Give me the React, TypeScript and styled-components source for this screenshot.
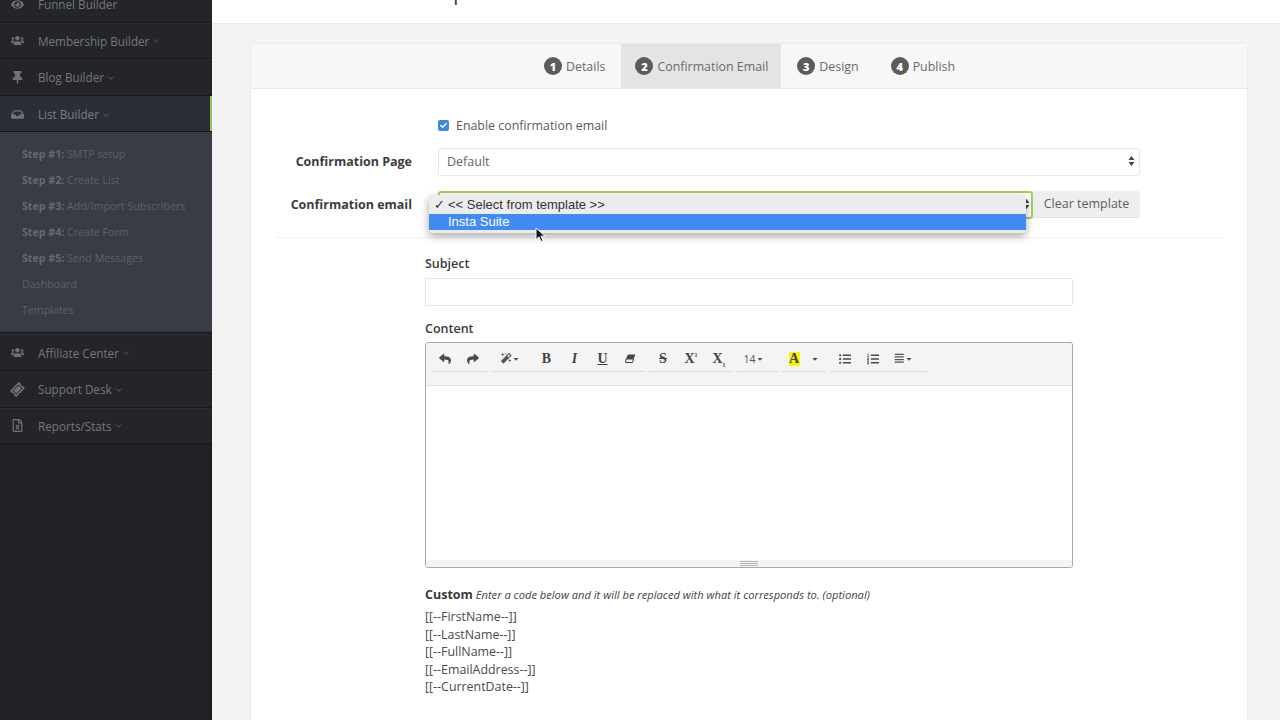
import React from "react";
import styled, { createGlobalStyle } from "styled-components";
import {
  FaEye, FaUsers, FaThumbtack, FaInbox, FaTicketAlt, FaRegFileExcel,
  FaMagic, FaListUl, FaListOl, FaAlignJustify, FaReply, FaShare, FaCaretDown, FaCheck,
} from "react-icons/fa";
import { ChevronDown } from "lucide-react";

const Global = createGlobalStyle`
  html, body { margin: 0; padding: 0; height: 100%; overflow: hidden; }
  body { font-family: "Open Sans", "Liberation Sans", sans-serif; font-size: 13px; color: #555; }
`;

const Page = styled.div`
  display: flex;
  width: 1280px;
  height: 720px;
  overflow: hidden;
  background: #f3f3f4;
`;

const Sidebar = styled.nav`
  width: 212px;
  flex: none;
  background: #1f2126;
  overflow: hidden;
  box-shadow: inset -1px 0 0 #17181c;
`;

const NavList = styled.div`
  margin-top: -14px;
  display: flex;
  flex-direction: column;
`;

const NavItem = styled.div<{ $active?: boolean }>`
  height: 36.6px;
  box-sizing: border-box;
  display: flex;
  align-items: center;
  padding: 1px 0 0 11px;
  position: relative;
  color: ${(p) => (p.$active ? "#7b7e85" : "#75777c")};
  font-size: 11.7px;
  background: ${(p) => (p.$active ? "#2b2e35" : "#24252a")};
  border-bottom: 1px solid #17181c;
  box-shadow: inset 0 1px 0 #2b2c31;
`;

const ActiveBar = styled.span`
  position: absolute;
  right: 0;
  top: 0;
  bottom: 0;
  width: 2px;
  background: #97c35a;
`;

const NavIcon = styled.span<{ $tilt?: boolean }>`
  width: 27px;
  flex: none;
  display: flex;
  font-size: 13px;
  color: #6f7176;
  svg { transform: ${(p) => (p.$tilt ? "rotate(-45deg)" : "none")}; }
`;

const Chevron = styled(ChevronDown)`
  margin: 1px 0 0 2px;
  width: 10px;
  height: 10px;
  stroke-width: 1.5;
`;

const SubMenu = styled.div`
  background: #393b45;
  padding: 9px 0 10px 22px;
  height: 200px;
  box-sizing: border-box;
  margin-bottom: 2px;
  border-bottom: 1px solid #30323a;
`;

const SubItem = styled.div`
  height: 26px;
  line-height: 26px;
  font-size: 10.65px;
  color: #5e616c;
  b { font-weight: 700; color: #666974; }
`;

const Main = styled.main`
  flex: 1;
  min-width: 0;
  display: flex;
  flex-direction: column;
`;

const TopBar = styled.header`
  height: 24px;
  flex: none;
  background: #fff;
  border-bottom: 1px solid #ececec;
  box-sizing: border-box;
  overflow: hidden;
  padding-left: 241px;
`;

const TopTitle = styled.div`
  font-size: 22px;
  line-height: 22px;
  margin-top: -20px;
  color: #444;
`;

const Card = styled.section`
  margin: 19px 32px 0 38px;
  flex: 1;
  background: #fff;
  border: 1px solid #ececec;
  border-bottom: 0;
  border-radius: 3px 3px 0 0;
`;

const Tabs = styled.div`
  height: 44px;
  background: #f7f7f7;
  border-bottom: 1px solid #e9e9e9;
  display: flex;
  padding-left: 277px;
`;

const Tab = styled.div<{ $active?: boolean }>`
  display: flex;
  align-items: center;
  gap: 4px;
  padding: 0 ${(p) => (p.$active ? "13px 0 14px" : "16px")};
  background: ${(p) => (p.$active ? "#e4e4e4" : "transparent")};
  color: #6a6a6a;
  font-size: 12.4px;
`;

const Badge = styled.span`
  width: 18px;
  height: 18px;
  border-radius: 50%;
  background: #5c5c5c;
  color: #fff;
  font-weight: 800;
  font-size: 11px;
  display: flex;
  align-items: center;
  justify-content: center;
`;

const Form = styled.div`
  position: relative;
  padding: 26px 25px 0 25px;
`;

const FieldGrid = styled.div`
  display: grid;
  grid-template-columns: 136px 702px;
  column-gap: 26px;
  align-items: center;
  row-gap: 15px;
`;

const CheckCell = styled.label`
  grid-column: 2;
  display: flex;
  align-items: center;
  gap: 7px;
  height: 20px;
  color: #5a5a5a;
  font-size: 12.4px;
  margin-bottom: -2px;
`;

const CheckBox = styled.span`
  width: 11px;
  height: 11px;
  border-radius: 2px;
  background: #3f86e0;
  color: #fff;
  display: flex;
  align-items: center;
  justify-content: center;
  font-size: 7px;
`;

const FieldLabel = styled.div`
  text-align: right;
  font-weight: 700;
  font-size: 12.5px;
  color: #3c3c3c;
  padding-bottom: 2px;
`;

const SelectBox = styled.div<{ $accent?: boolean }>`
  flex: 1;
  height: 28px;
  box-sizing: border-box;
  border: ${(p) => (p.$accent ? "2px solid #a6cf5c" : "1px solid #e6e6e6")};
  border-radius: 3px;
  padding: 0 ${(p) => (p.$accent ? "1px" : "4px")} 2px 8px;
  display: flex;
  align-items: center;
  justify-content: space-between;
  color: #666;
  font-size: 12.5px;
  background: #fff;
`;

const TemplateRow = styled.div`
  display: flex;
`;

const ClearButton = styled.div`
  width: 107px;
  flex: none;
  height: 27px;
  box-sizing: border-box;
  padding-bottom: 2px;
  background: #eeeeee;
  border-radius: 0 3px 3px 0;
  border-bottom: 1px solid #e2e2e2;
  display: flex;
  align-items: center;
  justify-content: center;
  color: #5e5e5e;
  font-size: 12.5px;
`;

const Divider = styled.hr`
  border: 0;
  border-top: 1px solid #f1f1f1;
  margin: 18px 0 0;
`;

const EditorColumn = styled.div`
  width: 648px;
  margin: 18px 0 0 149px;
`;

const BlockLabel = styled.div`
  font-weight: 600;
  color: #3a3a3a;
  font-size: 12.5px;
  line-height: 16px;
`;

const TextInput = styled.div`
  height: 28px;
  box-sizing: border-box;
  border: 1px solid #e6e6e6;
  border-radius: 2px;
  margin: 6px 0 15px;
`;

const Editor = styled.div`
  margin-top: 5px;
  height: 226px;
  box-sizing: border-box;
  border: 1px solid #a9a9a9;
  border-radius: 3px;
  display: flex;
  flex-direction: column;
  overflow: hidden;
`;

const Toolbar = styled.div`
  height: 43px;
  flex: none;
  background: #f4f4f4;
  border-bottom: 1px solid #e4e4e4;
  box-sizing: border-box;
  display: flex;
  gap: 5.5px;
  padding: 5px 0 0 5px;
  align-items: flex-start;
`;

const ToolGroup = styled.div<{ $w: number }>`
  width: ${(p) => p.$w}px;
  height: 24px;
  box-sizing: border-box;
  padding-bottom: 2px;
  display: flex;
  align-items: center;
  border-bottom: 1px solid #d9d9d9;
  color: #4a4a4a;
  font-size: 12px;
`;

const ToolSlot = styled.span<{ $w?: number }>`
  width: ${(p) => p.$w ?? 28}px;
  flex: none;
  display: flex;
  align-items: center;
  justify-content: center;
`;

const SerifGlyph = styled.span<{ $i?: boolean; $u?: boolean; $s?: boolean }>`
  font-family: "Liberation Serif", serif;
  font-size: 14px;
  font-weight: 700;
  font-style: ${(p) => (p.$i ? "italic" : "normal")};
  text-decoration: ${(p) => (p.$u ? "underline" : p.$s ? "line-through" : "none")};
  color: #444;
  sup, sub { font-size: 6px; line-height: 0; }
`;

const Highlight = styled.span`
  background: #f6f600;
  font-family: "Liberation Serif", serif;
  font-weight: 700;
  font-size: 14px;
  line-height: 14px;
  width: 11px;
  text-align: center;
  color: #444;
`;

const SizeLabel = styled.span`
  display: flex;
  align-items: center;
  font-size: 10.5px;
  color: #555;
`;

const TinyCaret = styled(FaCaretDown)`
  font-size: 8px;
`;

const EditorBody = styled.div`
  flex: 1;
  background: #fff;
`;

const ResizeBar = styled.div`
  height: 7px;
  flex: none;
  background: #f4f4f4;
  display: flex;
  flex-direction: column;
  align-items: center;
  justify-content: center;
  gap: 1px;
  i { display: block; width: 18px; height: 1px; background: #b5b5b5; }
`;

const CustomHead = styled.div`
  margin-top: 19px;
  line-height: 16px;
  color: #444;
  font-size: 11.15px;
  font-style: italic;
  b { font-style: normal; font-weight: 700; font-size: 12.5px; color: #3a3a3a; }
`;

const CodeList = styled.div`
  margin-top: 5px;
  font-size: 12.4px;
  line-height: 17.5px;
  color: #4a4a4a;
`;

/* The open native select list, lying over the select */
const PopupMenu = styled.div`
  position: absolute;
  left: 178px;
  top: 106px;
  width: 597px;
  height: 38px;
  box-sizing: border-box;
  padding-top: 2px;
  background: #ececec;
  border-radius: 4px;
  box-shadow: 0 3px 9px rgba(0, 0, 0, 0.35);
  font-family: "Liberation Sans", sans-serif;
  font-size: 13px;
  color: #333;
`;

const PopupOption = styled.div<{ $selected?: boolean }>`
  height: 16.5px;
  line-height: 16.5px;
  padding-left: 19px;
  background: ${(p) => (p.$selected ? "#418bf5" : "transparent")};
  color: ${(p) => (p.$selected ? "#fff" : "#333")};
  position: relative;
`;

const Tick = styled.span`
  position: absolute;
  left: 5px;
  top: 0;
`;

const Pointer = styled.svg`
  position: absolute;
  left: 284px;
  top: 138px;
`;

const Arrows = () => (
  <svg width="7" height="12" viewBox="0 0 7 12">
    <path d="M3.5 1 6.5 5H.5zM3.5 11 .5 7h6z" fill="#444" />
  </svg>
);

const EraserIcon = () => (
  <svg width="11" height="9" viewBox="0 0 11 9">
    <path d="M3 .5h7.5L8.5 5H1z" fill="#444" />
    <path d="M1 5h7.5L7.5 8.5H.5z" fill="none" stroke="#444" />
  </svg>
);

const tabs = [
  { n: 1, label: "Details" },
  { n: 2, label: "Confirmation Email", active: true },
  { n: 3, label: "Design" },
  { n: 4, label: "Publish" },
];

const codes = ["FirstName", "LastName", "FullName", "EmailAddress", "CurrentDate"];

const steps = [
  ["Step #1:", "SMTP setup"],
  ["Step #2:", "Create List"],
  ["Step #3:", "Add/Import Subscribers"],
  ["Step #4:", "Create Form"],
  ["Step #5:", "Send Messages"],
];

export default function App() {
  return (
    <Page>
      <Global />
      <Sidebar>
        <NavList>
          <NavItem><NavIcon><FaEye /></NavIcon>Funnel Builder</NavItem>
          <NavItem><NavIcon><FaUsers /></NavIcon>Membership Builder<Chevron /></NavItem>
          <NavItem><NavIcon><FaThumbtack /></NavIcon>Blog Builder<Chevron /></NavItem>
          <NavItem $active><NavIcon><FaInbox /></NavIcon>List Builder<Chevron /><ActiveBar /></NavItem>
          <SubMenu>
            {steps.map(([a, b]) => (
              <SubItem key={a}><b>{a}</b> {b}</SubItem>
            ))}
            <SubItem>Dashboard</SubItem>
            <SubItem>Templates</SubItem>
          </SubMenu>
          <NavItem><NavIcon><FaUsers /></NavIcon>Affiliate Center<Chevron /></NavItem>
          <NavItem><NavIcon $tilt><FaTicketAlt /></NavIcon>Support Desk<Chevron /></NavItem>
          <NavItem><NavIcon><FaRegFileExcel /></NavIcon>Reports/Stats<Chevron /></NavItem>
        </NavList>
      </Sidebar>
      <Main>
        <TopBar><TopTitle>p</TopTitle></TopBar>
        <Card>
          <Tabs>
            {tabs.map((t) => (
              <Tab key={t.n} $active={t.active}><Badge>{t.n}</Badge>{t.label}</Tab>
            ))}
          </Tabs>
          <Form>
            <FieldGrid>
              <CheckCell><CheckBox><FaCheck /></CheckBox>Enable confirmation email</CheckCell>
              <FieldLabel>Confirmation Page</FieldLabel>
              <SelectBox>Default<Arrows /></SelectBox>
              <FieldLabel>Confirmation email</FieldLabel>
              <TemplateRow>
                <SelectBox $accent><span /><Arrows /></SelectBox>
                <ClearButton>Clear template</ClearButton>
              </TemplateRow>
            </FieldGrid>
            <Divider />
            <EditorColumn>
              <BlockLabel>Subject</BlockLabel>
              <TextInput />
              <BlockLabel>Content</BlockLabel>
              <Editor>
                <Toolbar>
                  <ToolGroup $w={56}>
                    <ToolSlot><FaReply /></ToolSlot>
                    <ToolSlot><FaShare /></ToolSlot>
                  </ToolGroup>
                  <ToolGroup $w={151}>
                    <ToolSlot $w={36}><SizeLabel><FaMagic /><TinyCaret /></SizeLabel></ToolSlot>
                    <ToolSlot $w={4} />
                    <ToolSlot><SerifGlyph>B</SerifGlyph></ToolSlot>
                    <ToolSlot><SerifGlyph $i>I</SerifGlyph></ToolSlot>
                    <ToolSlot><SerifGlyph $u>U</SerifGlyph></ToolSlot>
                    <ToolSlot><EraserIcon /></ToolSlot>
                  </ToolGroup>
                  <ToolGroup $w={82}>
                    <ToolSlot><SerifGlyph $s>S</SerifGlyph></ToolSlot>
                    <ToolSlot><SerifGlyph>X<sup>1</sup></SerifGlyph></ToolSlot>
                    <ToolSlot><SerifGlyph>X<sub>1</sub></SerifGlyph></ToolSlot>
                  </ToolGroup>
                  <ToolGroup $w={40}>
                    <ToolSlot $w={34}><SizeLabel>14<TinyCaret /></SizeLabel></ToolSlot>
                  </ToolGroup>
                  <ToolGroup $w={43}>
                    <ToolSlot $w={24}><Highlight>A</Highlight></ToolSlot>
                    <ToolSlot $w={18}><TinyCaret /></ToolSlot>
                  </ToolGroup>
                  <ToolGroup $w={96}>
                    <ToolSlot><FaListUl /></ToolSlot>
                    <ToolSlot><FaListOl /></ToolSlot>
                    <ToolSlot $w={34}><SizeLabel><FaAlignJustify /><TinyCaret /></SizeLabel></ToolSlot>
                  </ToolGroup>
                </Toolbar>
                <EditorBody />
                <ResizeBar><i /><i /><i /></ResizeBar>
              </Editor>
              <CustomHead><b>Custom</b> Enter a code below and it will be replaced with what it corresponds to. (optional)</CustomHead>
              <CodeList>
                {codes.map((c) => <div key={c}>{`[[--${c}--]]`}</div>)}
              </CodeList>
            </EditorColumn>
            <PopupMenu>
              <PopupOption>
                <Tick>✓</Tick>
                {"<< Select from template >>"}
              </PopupOption>
              <PopupOption $selected>Insta Suite</PopupOption>
            </PopupMenu>
            <Pointer width="12" height="16" viewBox="0 0 12 16">
              <path d="M1 1v11.5l3-2.6 2 4.6 2-.9-2-4.4h4z" fill="#111" stroke="#fff" strokeWidth="1" />
            </Pointer>
          </Form>
        </Card>
      </Main>
    </Page>
  );
}
